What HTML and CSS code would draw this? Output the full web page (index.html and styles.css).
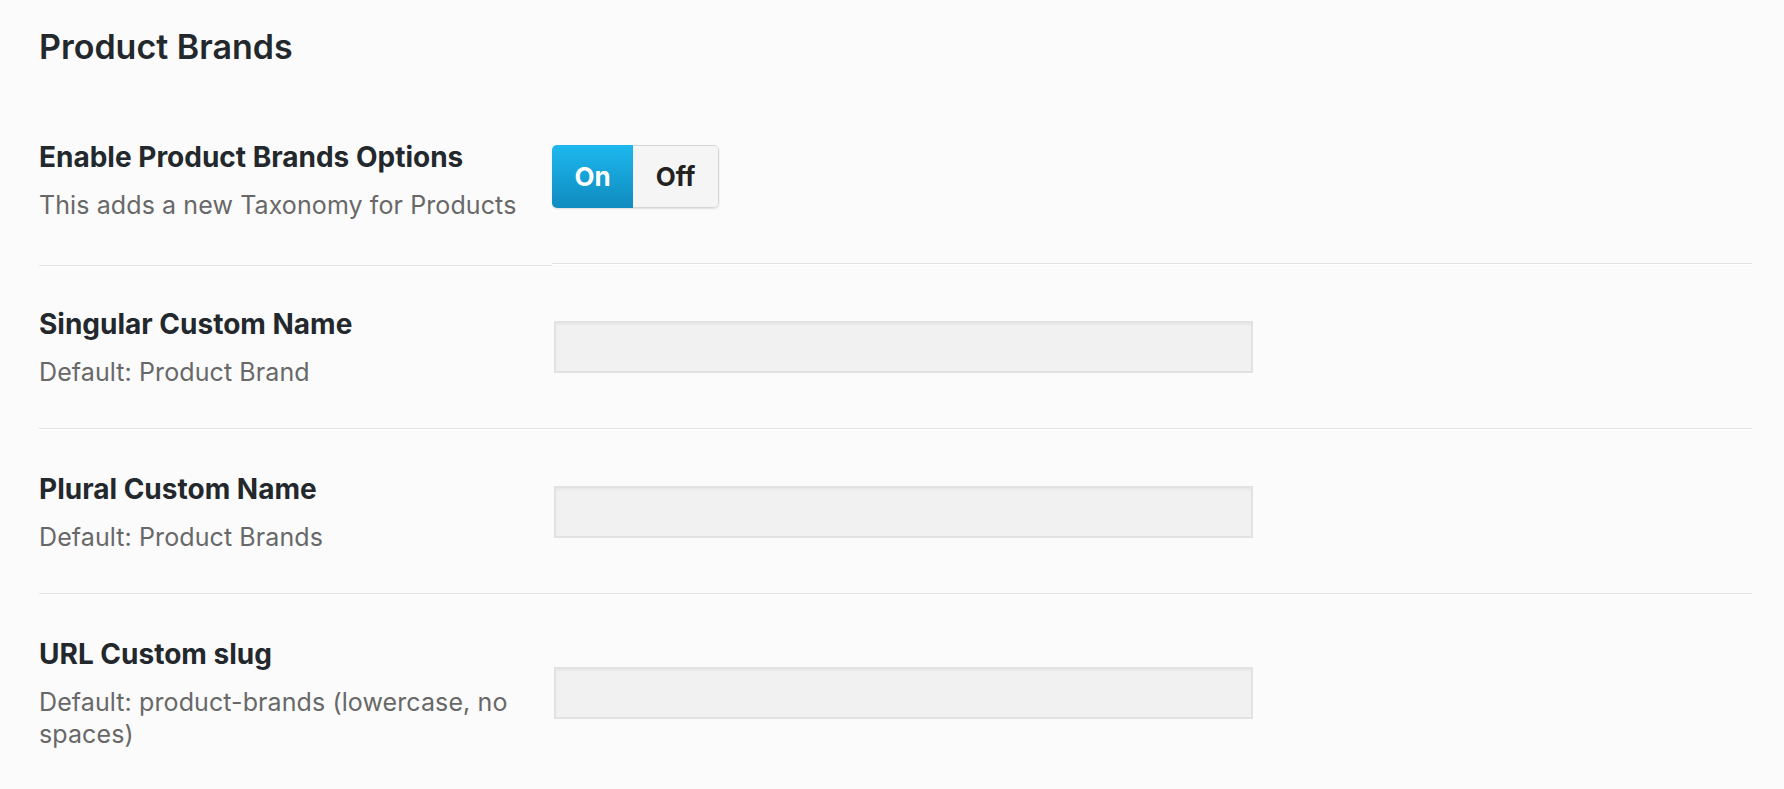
FILE: index.html
```html
<!DOCTYPE html>
<html lang="en">
<head>
  <meta charset="UTF-8" />
  <title>Product Brands</title>
  <link rel="stylesheet" href="styles.css">
</head>
<body>

<div class="page">
  <h2 class="section-title">Product Brands</h2>

  <div class="form-table">
    <div class="row row-first">
      <div class="th">
        <div class="label">Enable Product Brands Options</div>
        <div class="desc">This adds a new Taxonomy for Products</div>
      </div>
      <div class="td">
        <div class="switch">
          <span class="switch-on">On</span>
          <span class="switch-off">Off</span>
        </div>
      </div>
    </div>

    <div class="row">
      <div class="th">
        <div class="label">Singular Custom Name</div>
        <div class="desc">Default: Product Brand</div>
      </div>
      <div class="td">
        <input type="text" class="text-input">
      </div>
    </div>

    <div class="row">
      <div class="th">
        <div class="label">Plural Custom Name</div>
        <div class="desc">Default: Product Brands</div>
      </div>
      <div class="td">
        <input type="text" class="text-input">
      </div>
    </div>

    <div class="row row-last">
      <div class="th">
        <div class="label">URL Custom slug</div>
        <div class="desc">Default: product-brands (lowercase, no spaces)</div>
      </div>
      <div class="td">
        <input type="text" class="text-input">
      </div>
    </div>
  </div>
</div>

</body>
</html>
```

FILE: styles.css
```css
html, body {
  margin: 0;
  padding: 0;
  background: #fbfbfb;
  font-family: Inter, "Liberation Sans", sans-serif;
  color: #23282d;
}

.page {
  padding: 0 32px 0 39px;
}

.section-title {
  font-size: 34px;
  line-height: 40px;
  font-weight: 600;
  margin: 27px 0 31px;
}

.row {
  display: flex;
  border-bottom: 1px solid #e2e2e2;
  box-shadow: 0 1px 0 #fff;
  margin-bottom: 1px;
}

.row-last {
  border-bottom: none;
  box-shadow: none;
}

.th {
  flex: 0 0 513px;
  box-sizing: border-box;
  padding: 42px 20px 40px 0;
}

/* first row: left border sits a little lower than the right one */
.row-first {
  border-bottom: none;
  box-shadow: none;
}

.row-first .th,
.row-first .td {
  border-bottom: 1px solid #e2e2e2;
  box-shadow: 0 1px 0 #fff;
}

.row-first .th {
  padding-bottom: 44px;
  margin-bottom: -2px;
}

.td {
  flex: 1;
  display: flex;
  align-items: center;
}

.label {
  font-size: 28px;
  line-height: 34px;
  font-weight: 700;
}

.desc {
  font-size: 25px;
  line-height: 32px;
  letter-spacing: 0.1px;
  color: #686868;
  margin-top: 15px;
}

.switch {
  display: inline-flex;
  height: 63px;
  margin-bottom: 8px;
  border-radius: 5px;
  overflow: hidden;
  box-shadow: 0 1px 2px rgba(0,0,0,0.12);
  font-size: 26px;
  font-weight: 700;
}

.switch span {
  display: flex;
  align-items: center;
  justify-content: center;
  box-sizing: border-box;
}

.switch-on {
  width: 81px;
  color: #fff;
  background: linear-gradient(#1db8ee, #0f8bbf);
}

.switch-off {
  width: 86px;
  color: #222;
  background: #f5f5f5;
  border: 1px solid #d6d6d6;
  border-left: none;
  border-radius: 0 5px 5px 0;
}

.text-input {
  width: 699px;
  height: 52px;
  margin: 0 0 0 2px;
  box-sizing: border-box;
  background: #f1f1f1;
  border: 2px solid #e2e2e2;
  border-radius: 0;
  box-shadow: inset 0 2px 2px rgba(0,0,0,0.04);
  outline: none;
}
```
